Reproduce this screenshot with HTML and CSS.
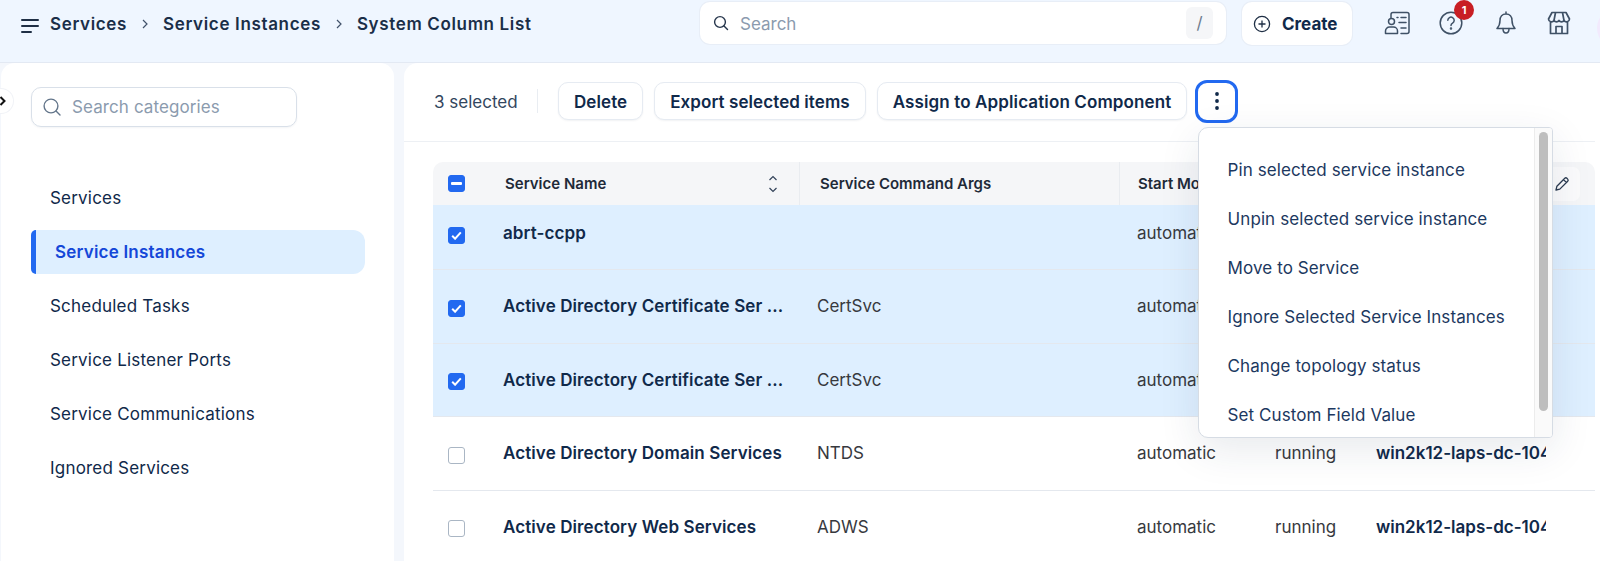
FILE: index.html
```html
<!DOCTYPE html>
<html lang="en">
<head>
<meta charset="utf-8">
<title>System Column List</title>
<link rel="stylesheet" href="styles.css">
</head>
<body>
<header class="topbar">
  <svg class="hamburger" width="18" height="16" viewBox="0 0 18 16"><path d="M1 2h16M1 8h16M1 14h9" fill="none" stroke="#1f2f45" stroke-width="2" stroke-linecap="round"/></svg>
  <nav class="crumbs">
    <span>Services</span>
    <svg class="crumb-sep" width="8" height="10" viewBox="0 0 8 10"><path d="M2 1l4 4-4 4" fill="none" stroke="#41526a" stroke-width="1.2"/></svg>
    <span>Service Instances</span>
    <svg class="crumb-sep" width="8" height="10" viewBox="0 0 8 10"><path d="M2 1l4 4-4 4" fill="none" stroke="#41526a" stroke-width="1.2"/></svg>
    <span>System Column List</span>
  </nav>
  <div class="global-search">
    <svg width="16" height="16" viewBox="0 0 16 16"><circle cx="7" cy="7" r="5.4" fill="none" stroke="#26364c" stroke-width="1.4"/><path d="M11 11l3.5 3.5" stroke="#26364c" stroke-width="1.4" stroke-linecap="round"/></svg>
    <span class="global-placeholder">Search</span>
    <span class="slash">/</span>
  </div>
  <button class="create">
    <svg width="18" height="18" viewBox="0 0 18 18"><circle cx="9" cy="9" r="7.6" fill="none" stroke="#1f2f45" stroke-width="1.3"/><path d="M9 5.5v7M5.5 9h7" stroke="#1f2f45" stroke-width="1.3"/></svg>
    <span>Create</span>
  </button>
  <div class="top-icons">
    <svg width="26" height="24" viewBox="0 0 26 24" fill="none" stroke="#3f5166" stroke-width="1.5" stroke-linecap="round" stroke-linejoin="round"><path d="M7 7V3.5A2 2 0 0 1 9 1.5h14a2 2 0 0 1 2 2v17a2 2 0 0 1-2 2h-6"/><path d="M13 6.5h1M17 6.5h5M15 11.5h7M17 17h5"/><circle cx="7.500" cy="10.500" r="3"/><path d="M1.500 22.500v-2.500a4 4 0 0 1 4-4h4a4 4 0 0 1 4 4v2.500z"/></svg>
    <span class="help">
      <svg width="24" height="24" viewBox="0 0 24 24" fill="none" stroke="#3f5166" stroke-width="1.5" stroke-linecap="round"><circle cx="12" cy="12" r="10.800"/><path d="M8.800 9.300a3.200 3.200 0 1 1 4.800 2.800c-1 .6-1.600 1.200-1.600 2.400"/><circle cx="12" cy="17.500" r=".5"/></svg>
      <span class="badge">1</span>
    </span>
    <svg class="bell" width="20" height="24" viewBox="0 0 20 24" fill="none" stroke="#3f5166" stroke-width="1.5" stroke-linecap="round" stroke-linejoin="round"><path d="M10 1v2M10 3c-3.800 0-6 2.800-6 6.500 0 4-1.200 6-3 8h18c-1.800-2-3-4-3-8C16 5.800 13.800 3 10 3z"/><path d="M7 17.500c0 3 1.300 4.500 3 4.500s3-1.500 3-4.500"/></svg>
    <svg class="store" width="24" height="24" viewBox="0 0 24 24" fill="none" stroke="#3f5166" stroke-width="1.700" stroke-linejoin="round"><path d="M5 1.500h14l3.500 6.500a3 3 0 0 1-5.500 1.500 3 3 0 0 1-5 0 3 3 0 0 1-5 0A3 3 0 0 1 1.500 8z"/><path d="M8.500 1.500L7 9.500M15.500 1.500l1.500 8"/><path d="M3.500 11v11.500h17V11M9 22.500v-7h6v7"/></svg>
    <span class="avatar"></span>
  </div>
</header>

<div class="content">
  <aside class="sidebar">
    <span class="toggle"><svg width="8" height="12" viewBox="0 0 8 12"><path d="M1.500 2L5.500 6l-4 4" fill="none" stroke="#111" stroke-width="2"/></svg></span>
    <div class="cat-search">
      <svg width="20" height="20" viewBox="0 0 20 20"><circle cx="9" cy="9" r="6.900" fill="none" stroke="#63758a" stroke-width="1.400"/><path d="M14 14l4 4" stroke="#63758a" stroke-width="1.400" stroke-linecap="round"/></svg>
      <span>Search categories</span>
    </div>
    <ul class="cats">
      <li class="cat">Services</li>
      <li class="cat active">Service Instances</li>
      <li class="cat">Scheduled Tasks</li>
      <li class="cat">Service Listener Ports</li>
      <li class="cat">Service Communications</li>
      <li class="cat">Ignored Services</li>
    </ul>
  </aside>

  <main class="main">
    <div class="toolbar">
      <span class="sel-count">3 selected</span>
      <span class="tool-div"></span>
      <button class="tool-btn">Delete</button>
      <button class="tool-btn">Export selected items</button>
      <button class="tool-btn">Assign to Application Component</button>
      <button class="more"><svg width="4" height="18" viewBox="0 0 4 18" fill="#10294a"><circle cx="2" cy="2" r="1.900"/><circle cx="2" cy="9" r="1.900"/><circle cx="2" cy="16" r="1.900"/></svg></button>
    </div>

    <div class="table">
      <div class="thead">
        <span class="cell-check"><span class="check on"><svg width="11" height="3" viewBox="0 0 11 3"><rect width="11" height="3" rx="1" fill="#fff"/></svg></span></span>
        <span class="th th-name">Service Name
          <svg width="12" height="18" viewBox="0 0 12 18" fill="none" stroke="#33435a" stroke-width="1.200"><path d="M2.500 5L6 1.500 9.500 5M2.500 13L6 16.500 9.500 13"/></svg>
        </span>
        <span class="th th-args">Service Command Args</span>
        <span class="th th-mode">Start Mode</span>
        <span class="edit"><svg width="16" height="16" viewBox="0 0 16 16" fill="none" stroke="#2b3b50" stroke-width="1.300" stroke-linejoin="round"><path d="M2 14l.9-3.800L10.800 2.300a1.500 1.500 0 0 1 2.100 0l.8.8a1.500 1.500 0 0 1 0 2.100L5.800 13.100zM9.500 3.600l2.900 2.900"/></svg></span>
      </div>

      <div class="row selected first">
        <span class="cell-check"><span class="check on"><svg width="11" height="9" viewBox="0 0 11 9"><path d="M1.200 4.800l2.900 2.900 5.700-6.300" fill="none" stroke="#fff" stroke-width="2"/></svg></span></span>
        <span class="name">abrt-ccpp</span><span class="val"></span><span class="val">automatic</span><span class="val">running</span><span class="host">win2k12-laps-dc-104</span>
      </div>
      <div class="row selected">
        <span class="cell-check"><span class="check on"><svg width="11" height="9" viewBox="0 0 11 9"><path d="M1.200 4.800l2.900 2.900 5.700-6.300" fill="none" stroke="#fff" stroke-width="2"/></svg></span></span>
        <span class="name">Active Directory Certificate Ser ...</span><span class="val">CertSvc</span><span class="val">automatic</span><span class="val">running</span><span class="host">win2k12-laps-dc-104</span>
      </div>
      <div class="row selected">
        <span class="cell-check"><span class="check on"><svg width="11" height="9" viewBox="0 0 11 9"><path d="M1.200 4.800l2.900 2.900 5.700-6.300" fill="none" stroke="#fff" stroke-width="2"/></svg></span></span>
        <span class="name">Active Directory Certificate Ser ...</span><span class="val">CertSvc</span><span class="val">automatic</span><span class="val">running</span><span class="host">win2k12-laps-dc-104</span>
      </div>
      <div class="row">
        <span class="cell-check"><span class="check"></span></span>
        <span class="name">Active Directory Domain Services</span><span class="val">NTDS</span><span class="val">automatic</span><span class="val">running</span><span class="host">win2k12-laps-dc-104</span>
      </div>
      <div class="row">
        <span class="cell-check"><span class="check"></span></span>
        <span class="name">Active Directory Web Services</span><span class="val">ADWS</span><span class="val">automatic</span><span class="val">running</span><span class="host">win2k12-laps-dc-104</span>
      </div>
    </div>
  </main>
</div>

<div class="menu">
  <ul class="menu-list">
    <li>Pin selected service instance</li>
    <li>Unpin selected service instance</li>
    <li>Move to Service</li>
    <li>Ignore Selected Service Instances</li>
    <li>Change topology status</li>
    <li>Set Custom Field Value</li>
  </ul>
  <div class="menu-track"><span class="menu-thumb"></span></div>
</div>
</body>
</html>
```

FILE: styles.css
```css
* { box-sizing: border-box; }
html, body { margin: 0; height: 561px; overflow: hidden; }
body {
  background: #f4f7fc;
  font-family: Inter, "Liberation Sans", sans-serif;
  color: #10294a;
  display: flex;
  flex-direction: column;
}
ul { list-style: none; margin: 0; padding: 0; }
button { font-family: inherit; color: inherit; cursor: pointer; }

.topbar {
  height: 63px;
  flex: none;
  background: #eff6ff;
  border-bottom: 1px solid #e3e9f3;
  display: flex;
  align-items: flex-start;
  padding-left: 21px;
}
.topbar > * { flex: none; }
.hamburger { margin-top: 18px; }
.crumbs {
  margin-left: 11px;
  height: 48px;
  width: 650px;
  display: flex;
  align-items: center;
  gap: 14px;
  font-size: 17px;
  font-weight: 600;
  letter-spacing: .65px;
  color: #1a2e48;
}
.global-search {
  width: 526px;
  height: 42px;
  margin-top: 2px;
  background: #fff;
  border-radius: 10px;
  box-shadow: 0 0 0 1px #e8eef7;
  display: flex;
  align-items: center;
  padding-left: 13px;
}
.global-placeholder { margin: 2px 0 0 11px; font-size: 17px; color: #8b9bae; flex: 1; }
.slash {
  width: 27px;
  height: 32px;
  margin-right: 13px;
  background: #f5f6f8;
  border-radius: 6px;
  display: flex;
  align-items: center;
  justify-content: center;
  color: #6e7d8f;
  font-size: 17px;
}
.create {
  width: 110px;
  height: 43px;
  margin: 2px 0 0 16px;
  background: #fff;
  border: 0;
  border-radius: 10px;
  box-shadow: 0 0 0 1px #e8eef7;
  display: flex;
  align-items: center;
  gap: 11px;
  padding: 0 0 0 11px;
  font-size: 17px;
  font-weight: 700;
  color: #10294a;
}
.top-icons {
  margin-left: 32px;
  margin-top: 11px;
  display: flex;
  align-items: flex-start;
}
.top-icons > * { flex: none; }
.help { position: relative; display: block; width: 24px; height: 24px; margin-left: 29px; }
.badge {
  position: absolute;
  left: 15px;
  top: -11px;
  width: 20px;
  height: 20px;
  border-radius: 50%;
  background: #c81e24;
  color: #fff;
  font-size: 11px;
  font-weight: 700;
  display: flex;
  align-items: center;
  justify-content: center;
}
.bell { margin-left: 33px; }
.store { margin-left: 31px; }
.avatar {
  width: 40px;
  height: 40px;
  margin: -3px 0 0 26px;
  border-radius: 50%;
  background: #f2eafd;
}

.content { flex: 1; display: flex; gap: 10px; padding-left: 1px; min-height: 0; }

.sidebar {
  position: relative;
  width: 393px;
  flex: none;
  background: #fff;
  border-radius: 14px 14px 0 0;
  padding: 24px 0 0 30px;
}
.toggle {
  position: absolute;
  left: -12px;
  top: 26px;
  width: 24px;
  height: 24px;
  border-radius: 50%;
  background: #fff;
  box-shadow: 0 0 0 1px #f1f3f7;
  display: flex;
  align-items: center;
  justify-content: flex-end;
  padding-right: 6px;
}
.cat-search {
  width: 266px;
  height: 40px;
  border: 1px solid #d9e0e9;
  border-radius: 10px;
  display: flex;
  align-items: center;
  gap: 10px;
  padding-left: 10px;
  font-size: 17px;
  letter-spacing: .1px;
  color: #8b9bae;
  box-shadow: 0 1px 2px rgba(20, 40, 70, .05);
}
.cats { margin-top: 49px; width: 334px; display: flex; flex-direction: column; gap: 10px; }
.cat {
  height: 44px;
  display: flex;
  align-items: center;
  padding-left: 19px;
  font-size: 17px;
  letter-spacing: .2px;
  color: #10294a;
}
.cat.active {
  background: #deefff;
  border-left: 5px solid #2269f0;
  border-radius: 5px 12px 12px 5px;
  font-weight: 600;
  color: #1447d8;
}

.main {
  flex: 1;
  min-width: 0;
  background: #fff;
  border-radius: 14px 0 0 0;
  padding-right: 5px;
}
.toolbar {
  height: 79px;
  border-bottom: 1px solid #edf0f4;
  display: flex;
  align-items: center;
  padding: 0 0 2px 30px;
}
.sel-count { font-size: 17px; color: #33465e; width: 103px; margin-top: 2px; white-space: nowrap; }
.tool-div { width: 1px; height: 24px; background: #e9edf2; margin-right: 20px; }
.tool-btn {
  height: 38px;
  padding: 1px 15px 0;
  margin-right: 11px;
  background: #fff;
  border: 1px solid #e6ebf2;
  border-radius: 10px;
  box-shadow: 0 1px 2px rgba(20, 40, 70, .06);
  font-size: 17px;
  font-weight: 600;
  letter-spacing: .08px;
  white-space: nowrap;
}
.tool-btn:nth-of-type(3) { margin-right: 8px; letter-spacing: .12px; }
.more {
  width: 43px;
  height: 43px;
  background: #fff;
  border: 3px solid #2269f0;
  border-radius: 12px;
  display: flex;
  align-items: center;
  justify-content: center;
  padding: 0;
}

.table { margin: 20px 0 0 29px; }
.thead {
  height: 43px;
  background: #f5f6f8;
  border-radius: 10px 10px 0 0;
  display: grid;
  grid-template-columns: 70px 296px 320px 1fr 36px;
  align-items: center;
  padding-right: 15px;
}
.cell-check { display: flex; padding-left: 15px; }
.check {
  width: 17px;
  height: 17px;
  border-radius: 3px;
  border: 1.500px solid #aab6c4;
  background: #fff;
  display: flex;
  align-items: center;
  justify-content: center;
}
.check.on { background: #2269f0; border-color: #2269f0; }
.th {
  height: 100%;
  display: flex;
  align-items: center;
  font-size: 15px;
  font-weight: 600;
  color: #1f2a38;
  white-space: nowrap;
}
.th-name { justify-content: space-between; padding: 0 20px 0 2px; }
.th-args { border-left: 1px solid #e9ecf0; padding-left: 20px; }
.th-mode { border-left: 1px solid #e9ecf0; padding-left: 18px; }
.edit {
  height: 34px;
  background: #fbfbfc;
  border-radius: 7px;
  display: flex;
  align-items: center;
  justify-content: center;
}

.row {
  height: 73.500px;
  display: grid;
  grid-template-columns: 70px 314px 320px 138px 101px 170px;
  align-items: center;
  border-bottom: 1px solid #e4e8ee;
  font-size: 17px;
}
.row .cell-check { margin-top: 4px; }
.row.first { height: 65px; padding-bottom: 8px; }
.row.selected { background: #deefff; }
.name { font-weight: 600; letter-spacing: .1px; white-space: nowrap; overflow: hidden; }
.val { color: #37393e; }
.row > .host { font-weight: 600; white-space: nowrap; overflow: hidden; width: 170px; }

.menu {
  position: absolute;
  left: 1198px;
  top: 127px;
  width: 355px;
  height: 311px;
  background: #fff;
  border: 1px solid #d6dce4;
  border-radius: 10px 4px 4px 10px;
  box-shadow: 0 12px 40px rgba(30, 50, 80, .10);
  display: flex;
  overflow: hidden;
}
.menu-list {
  flex: 1;
  padding: 17px 0 0 28.500px;
  display: flex;
  flex-direction: column;
  font-size: 17px;
  letter-spacing: .1px;
  color: #1c3860;
}
.menu-list li { height: 49px; flex: none; display: flex; align-items: center; white-space: nowrap; }
.menu-track {
  width: 18px;
  flex: none;
  background: #fafafa;
  border-left: 1px solid #ececec;
  padding: 4px 4px 0;
}
.menu-thumb { display: block; height: 279px; background: #bebebe; border-radius: 5px; }
```
